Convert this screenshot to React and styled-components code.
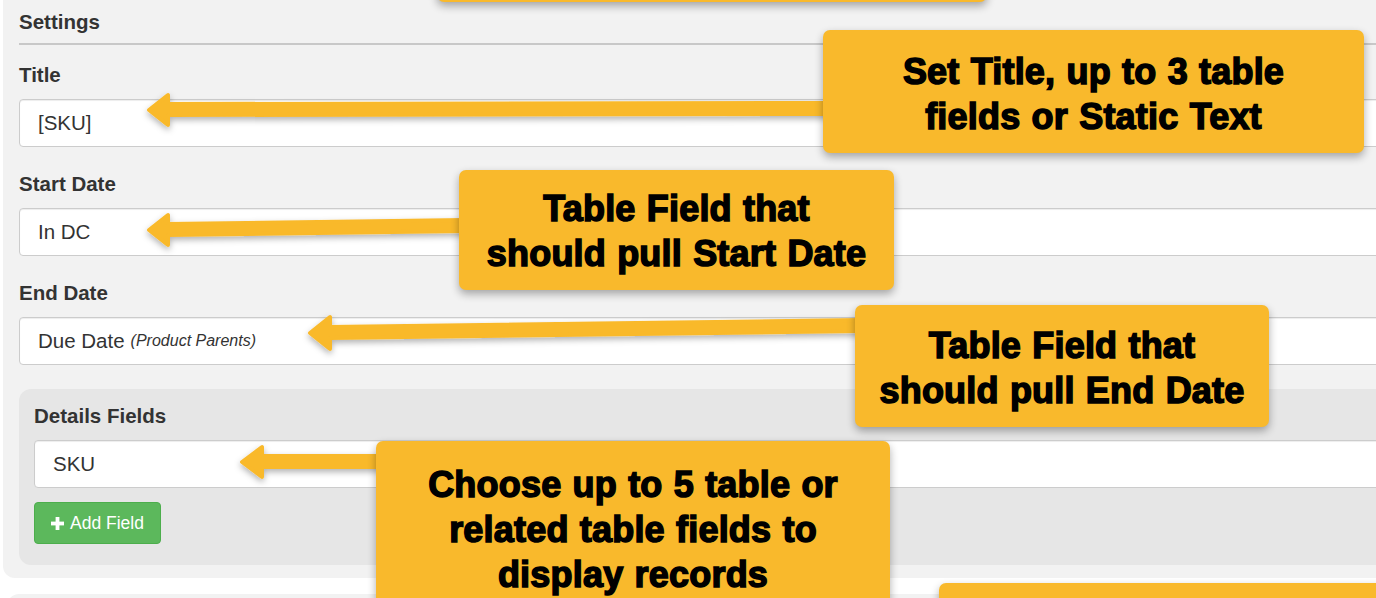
import React from 'react';
import styled, { createGlobalStyle } from 'styled-components';

const Global = createGlobalStyle`
  html, body { margin: 0; padding: 0; background: #fff; overflow: hidden; }
  body { font-family: "Liberation Sans", Arial, Helvetica, sans-serif; }
  * { box-sizing: border-box; }
`;

const Page = styled.div`
  position: relative;
  width: 1376px;
  height: 598px;
  overflow: hidden;
`;

const Panel = styled.section`
  margin: ${(p) => p.$top || 0}px -80px 0 ${(p) => p.$left || 3}px;
  background: #f2f2f2;
  border-radius: ${(p) => (p.$next ? '12px 12px 0 0' : '0 0 12px 12px')};
  padding: 10px 0 13px 16px;
  min-height: ${(p) => (p.$next ? '60px' : 'auto')};
`;

const SectionTitle = styled.div`
  font-size: 20.5px;
  line-height: 24px;
  font-weight: 700;
  color: #333;
`;

const Divider = styled.div`
  border-top: 2px solid #c8c8c8;
  margin: 9px 0 18px;
`;

const Form = styled.div`
  display: flex;
  flex-direction: column;
  gap: 25px;
`;

const Group = styled.div`
  display: flex;
  flex-direction: column;
  gap: 12px;
`;

const Label = styled.label`
  font-size: 20.5px;
  line-height: 24px;
  font-weight: 700;
  color: #333;
`;

const Field = styled.div`
  height: 48px;
  display: flex;
  align-items: center;
  padding: 0 18px;
  background: #fff;
  border: 1px solid #cccccc;
  border-radius: 4px;
  box-shadow: inset 0 1px 1px rgba(0, 0, 0, 0.075);
  font-size: 20.5px;
  color: #333;
  white-space: nowrap;
`;

const Note = styled.em`
  font-size: 16px;
  margin-left: 6px;
  color: #333;
`;

const Details = styled.div`
  display: flex;
  flex-direction: column;
  gap: 12px;
  background: #e6e6e6;
  border-radius: 12px;
  padding: 15px 15px 21px 15px;
  margin-top: -1px;
`;

const AddButton = styled.button`
  align-self: flex-start;
  margin-top: 2px;
  display: inline-flex;
  align-items: center;
  gap: 6px;
  height: 42px;
  padding: 0 16px;
  background: #5cb85c;
  border: 1px solid #4cae4c;
  border-radius: 4px;
  color: #fff;
  font-family: "Liberation Sans", Arial, sans-serif;
  font-size: 17.5px;
`;

const Callout = styled.div`
  position: absolute;
  left: ${(p) => p.$x}px;
  top: ${(p) => p.$y}px;
  width: ${(p) => p.$w}px;
  height: ${(p) => p.$h}px;
  padding-top: ${(p) => p.$pt || 0}px;
  background: #f9b92c;
  border-radius: 7px;
  box-shadow: 0 4px 9px rgba(0, 0, 0, 0.32);
  display: flex;
  align-items: ${(p) => (p.$top ? 'flex-start' : 'center')};
  justify-content: center;
  text-align: center;
  font-family: "Liberation Sans", Arial, sans-serif;
  font-weight: 700;
  font-size: 36px;
  line-height: 45px;
  letter-spacing: 0.2px;
  word-spacing: 1px;
  color: #000;
  -webkit-text-stroke: 1.5px #000;
  z-index: 3;
`;

const ArrowLayer = styled.svg`
  position: absolute;
  left: 0;
  top: 0;
  width: 1376px;
  height: 598px;
  pointer-events: none;
  z-index: 2;
`;

const arrows = [
  '149,110 168,95 168,104 830,103 830,114 168,115 168,125',
  '149,230 168,215 168,224 465,220 465,231 168,235 168,245',
  '310,333 330,317 330,327 860,320 860,331 330,338 330,349',
  '242,462 262,447 262,456 382,456 382,467 262,467 262,477',
];

const Plus = () => (
  <svg width="13" height="13" viewBox="0 0 13 13" aria-hidden="true">
    <rect x="4.6" y="0" width="3.8" height="13" fill="#fff" />
    <rect x="0" y="4.6" width="13" height="3.8" fill="#fff" />
  </svg>
);

export default function App() {
  return (
    <Page>
      <Global />
      <Panel>
        <SectionTitle>Settings</SectionTitle>
        <Divider />
        <Form>
          <Group>
            <Label>Title</Label>
            <Field>[SKU]</Field>
          </Group>
          <Group>
            <Label>Start Date</Label>
            <Field>In DC</Field>
          </Group>
          <Group>
            <Label>End Date</Label>
            <Field>
              Due Date<Note>(Product Parents)</Note>
            </Field>
          </Group>
          <Details>
            <Label>Details Fields</Label>
            <Field>SKU</Field>
            <AddButton>
              <Plus />
              Add Field
            </AddButton>
          </Details>
        </Form>
      </Panel>
      <Panel $next $top={16} $left={7} />

      <ArrowLayer viewBox="0 0 1376 598">
        <defs>
          <filter id="sh" x="-10%" y="-50%" width="120%" height="200%">
            <feDropShadow dx="0" dy="3" stdDeviation="3" floodColor="#000" floodOpacity="0.3" />
          </filter>
        </defs>
        {arrows.map((pts) => (
          <polygon
            key={pts}
            points={pts}
            fill="#f9b92c"
            stroke="#f9b92c"
            strokeWidth="4"
            strokeLinejoin="round"
            filter="url(#sh)"
          />
        ))}
      </ArrowLayer>

      <Callout $x={437} $y={-100} $w={550} $h={102} />
      <Callout $x={823} $y={30} $w={541} $h={123} $pt={5}>
        Set Title, up to 3 table
        <br />
        fields or Static Text
      </Callout>
      <Callout $x={459} $y={170} $w={435} $h={120} $pt={2}>
        Table Field that
        <br />
        should pull Start Date
      </Callout>
      <Callout $x={855} $y={305} $w={414} $h={122} $pt={4}>
        Table Field that
        <br />
        should pull End Date
      </Callout>
      <Callout $x={376} $y={441} $w={514} $h={200} $pt={21} $top>
        Choose up to 5 table or
        <br />
        related table fields to
        <br />
        display records
      </Callout>
      <Callout $x={939} $y={583} $w={500} $h={100} />
    </Page>
  );
}
